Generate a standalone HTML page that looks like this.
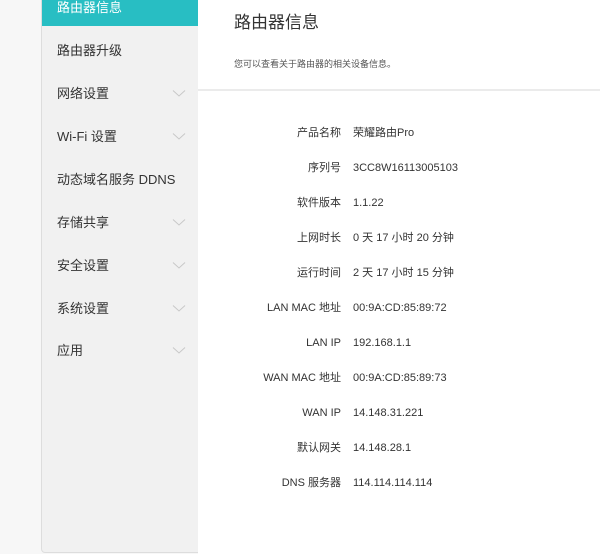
<!DOCTYPE html>
<html><head><meta charset="utf-8"><style>
body{margin:0;width:600px;height:554px;background:#f7f7f7;font-family:"Liberation Sans","Noto Sans CJK SC",sans-serif;position:relative;overflow:hidden}
.side{position:absolute;left:41px;top:-2px;width:156px;height:554px;background:#f1f1f1;border-left:1px solid #ddd;border-right:1px solid #ddd;border-bottom:1px solid #ddd;border-radius:0 0 0 4px}
.item{position:absolute;left:15px;font-size:13px;color:#333;line-height:16px}
.act{position:absolute;left:0;top:0;width:156px;height:28px;background:#28bec3}
.chev{position:absolute;left:130px;width:14px;height:9px}
.main{position:absolute;left:198px;top:0;width:402px;height:554px;background:#fff}
.hr{position:absolute;left:0;top:89px;width:402px;height:2px;background:#ebebeb}
.row{position:absolute;left:0;width:402px;font-size:11px;color:#333;line-height:14px}
.row .l{position:absolute;right:259px;text-align:right;white-space:nowrap}
.row .v{position:absolute;left:155px;white-space:nowrap}
</style></head><body>
<div class="side">
<div class="act"></div>
<div class="item" style="top:2px;color:#fff">路由器信息</div>
<div class="item" style="top:45px">路由器升级</div>
<div class="item" style="top:88px">网络设置</div>
<div class="item" style="top:131px">Wi-Fi 设置</div>
<div class="item" style="top:174px">动态域名服务 DDNS</div>
<div class="item" style="top:217px">存储共享</div>
<div class="item" style="top:260px">安全设置</div>
<div class="item" style="top:303px">系统设置</div>
<div class="item" style="top:345px">应用</div>
<svg class="chev" style="top:91px" viewBox="0 0 14 9"><path d="M1 1.5L7 7L13 1.5" fill="none" stroke="#c8c8c8" stroke-width="1"/></svg>
<svg class="chev" style="top:134px" viewBox="0 0 14 9"><path d="M1 1.5L7 7L13 1.5" fill="none" stroke="#c8c8c8" stroke-width="1"/></svg>
<svg class="chev" style="top:220px" viewBox="0 0 14 9"><path d="M1 1.5L7 7L13 1.5" fill="none" stroke="#c8c8c8" stroke-width="1"/></svg>
<svg class="chev" style="top:263px" viewBox="0 0 14 9"><path d="M1 1.5L7 7L13 1.5" fill="none" stroke="#c8c8c8" stroke-width="1"/></svg>
<svg class="chev" style="top:306px" viewBox="0 0 14 9"><path d="M1 1.5L7 7L13 1.5" fill="none" stroke="#c8c8c8" stroke-width="1"/></svg>
<svg class="chev" style="top:348px" viewBox="0 0 14 9"><path d="M1 1.5L7 7L13 1.5" fill="none" stroke="#c8c8c8" stroke-width="1"/></svg>
</div>
<div class="main">
<div style="position:absolute;left:36px;top:8px;font-size:17px;color:#333">路由器信息</div>
<div style="position:absolute;left:36px;top:57px;font-size:9px;color:#555">您可以查看关于路由器的相关设备信息。</div>
<div class="hr"></div>
<div class="row" style="top:126px"><span class="l">产品名称</span><span class="v">荣耀路由Pro</span></div>
<div class="row" style="top:161px"><span class="l">序列号</span><span class="v">3CC8W16113005103</span></div>
<div class="row" style="top:196px"><span class="l">软件版本</span><span class="v">1.1.22</span></div>
<div class="row" style="top:231px"><span class="l">上网时长</span><span class="v">0 天 17 小时 20 分钟</span></div>
<div class="row" style="top:266px"><span class="l">运行时间</span><span class="v">2 天 17 小时 15 分钟</span></div>
<div class="row" style="top:301px"><span class="l">LAN MAC 地址</span><span class="v">00:9A:CD:85:89:72</span></div>
<div class="row" style="top:336px"><span class="l">LAN IP</span><span class="v">192.168.1.1</span></div>
<div class="row" style="top:371px"><span class="l">WAN MAC 地址</span><span class="v">00:9A:CD:85:89:73</span></div>
<div class="row" style="top:406px"><span class="l">WAN IP</span><span class="v">14.148.31.221</span></div>
<div class="row" style="top:441px"><span class="l">默认网关</span><span class="v">14.148.28.1</span></div>
<div class="row" style="top:476px"><span class="l">DNS 服务器</span><span class="v">114.114.114.114</span></div>
</div>
</body></html>
